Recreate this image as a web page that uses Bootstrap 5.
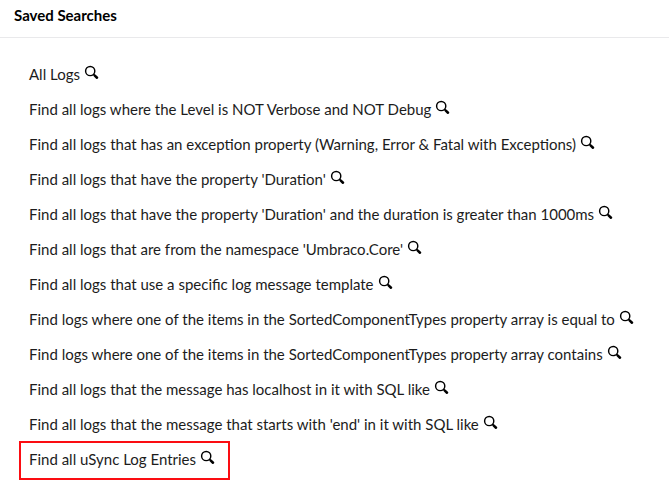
<!DOCTYPE html>
<html lang="en"><head><meta charset="utf-8"><title>Saved Searches</title>
<link href="https://cdn.jsdelivr.net/npm/bootstrap@5.3.0/dist/css/bootstrap.min.css" rel="stylesheet">
<style>
body{font-family:Lato,sans-serif;font-size:15px;color:#1c1c1c;background:#fff;overflow:hidden}
.panel-title{height:38px;font-size:15px;line-height:31px;padding-left:14px;color:#000;border-bottom:1px solid #e9e9eb}
.searches{padding:19px 0 0 19px}
.search-item{height:35px;line-height:35px;padding-left:10px;white-space:nowrap}
.search-item svg{width:15px;height:15px;margin-left:4px;margin-top:-7px;color:#000}
.highlighted{width:211px;height:39px;line-height:37px;margin-top:-1px;outline:2px solid #fb0d12;outline-offset:-2px}
</style></head><body>
<svg class="d-none"><symbol id="lens" viewBox="0 0 15 15"><circle cx="6.2" cy="6" r="4.6" fill="none" stroke="currentColor" stroke-width="1.45"/><path d="M9.3 9.2 10.6 10.4" stroke="currentColor" stroke-width="1.6"/><path d="M10.8 10.6 13 12.7" stroke="currentColor" stroke-width="2.6" stroke-linecap="round"/></symbol></svg>
<h1 class="panel-title fw-bold m-0">Saved Searches</h1>
<ul class="searches list-unstyled m-0">
<li class="search-item"><span>All Logs</span><svg><use href="#lens"/></svg></li>
<li class="search-item"><span>Find all logs where the Level is NOT Verbose and NOT Debug</span><svg><use href="#lens"/></svg></li>
<li class="search-item"><span>Find all logs that has an exception property (Warning, Error &amp; Fatal with Exceptions)</span><svg><use href="#lens"/></svg></li>
<li class="search-item"><span>Find all logs that have the property 'Duration'</span><svg><use href="#lens"/></svg></li>
<li class="search-item"><span>Find all logs that have the property 'Duration' and the duration is greater than 1000ms</span><svg><use href="#lens"/></svg></li>
<li class="search-item"><span>Find all logs that are from the namespace 'Umbraco.Core'</span><svg><use href="#lens"/></svg></li>
<li class="search-item"><span>Find all logs that use a specific log message template</span><svg><use href="#lens"/></svg></li>
<li class="search-item"><span>Find logs where one of the items in the SortedComponentTypes property array is equal to</span><svg><use href="#lens"/></svg></li>
<li class="search-item"><span>Find logs where one of the items in the SortedComponentTypes property array contains</span><svg><use href="#lens"/></svg></li>
<li class="search-item"><span>Find all logs that the message has localhost in it with SQL like</span><svg><use href="#lens"/></svg></li>
<li class="search-item"><span>Find all logs that the message that starts with 'end' in it with SQL like</span><svg><use href="#lens"/></svg></li>
<li class="search-item highlighted"><span>Find all uSync Log Entries</span><svg><use href="#lens"/></svg></li>
</ul>
<script src="https://cdn.jsdelivr.net/npm/bootstrap@5.3.0/dist/js/bootstrap.bundle.min.js"></script>
</body></html>
